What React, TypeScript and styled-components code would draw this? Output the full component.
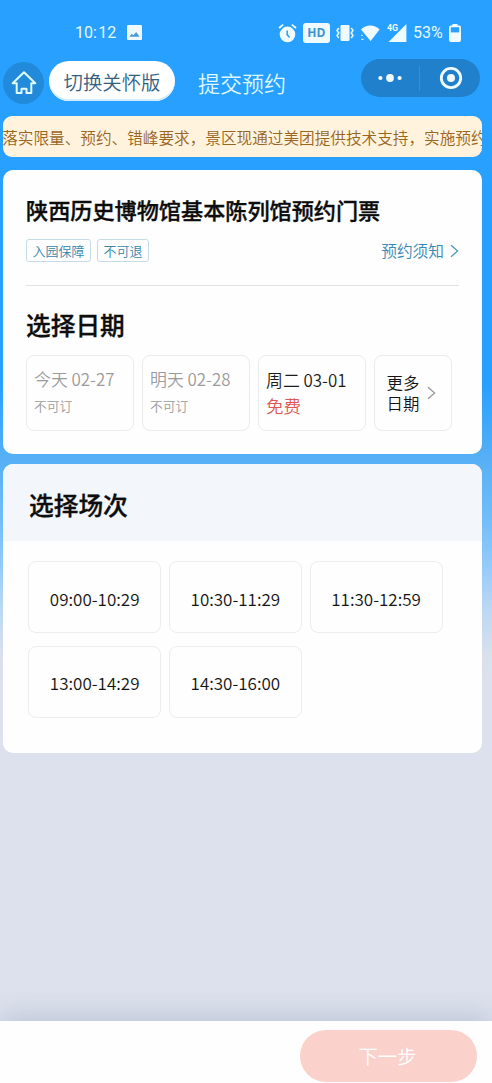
import React from 'react';
import styled, { createGlobalStyle } from 'styled-components';

const GlobalStyle = createGlobalStyle`
  * { box-sizing: border-box; }
  body {
    margin: 0;
    font-family: 'Noto Sans CJK SC', 'Noto Sans', sans-serif;
    font-weight: 350;
    color: #141414;
  }
  button { font-family: inherit; font-weight: inherit; margin: 0; padding: 0; border: 0; background: none; color: inherit; }
`;

const Page = styled.div`
  height: 1083px;
  overflow: hidden;
  display: flex;
  flex-direction: column;
  background: linear-gradient(180deg, #28a0ff 0, #28a0ff 385px, #57b0f5 460px, #72bdf9 520px, #93cafa 565px, #bcd8f3 610px, #d9e0ec 655px, #dde1ed 690px, #dde1ed 100%);
`;

const StatusBar = styled.header`
  height: 59px;
  flex: none;
  display: flex;
  justify-content: space-between;
  align-items: center;
  padding: 6px 31px 0 75px;
  color: #e6f8ff;
`;

const StatusGroup = styled.div<{ $gap: number }>`
  display: flex;
  align-items: center;
  gap: ${(p) => p.$gap}px;
`;

const StatusText = styled.span<{ $size: number }>`
  font-family: Roboto, sans-serif;
  font-size: ${(p) => p.$size}px;
  font-weight: 400;
  word-spacing: -2.5px;
  line-height: 20px;
`;

const NavBar = styled.nav`
  height: 45px;
  flex: none;
  display: flex;
  align-items: flex-start;
  padding: 0 12px 0 3px;
`;

const HomeButton = styled.button`
  width: 41px;
  height: 42px;
  margin-top: 3px;
  border-radius: 50%;
  background: #218ada;
  display: grid;
  place-items: center;
`;

const CarePill = styled.button`
  width: 126px;
  height: 40px;
  margin: 2px 0 0 5px;
  border-radius: 20px;
  background: #fff;
  box-shadow: inset 0 -2px 0 #d3ecfc;
  color: #33617f;
  font-size: 19.4px;
  line-height: 40px;
  padding-top: 1px;
`;

const NavTitle = styled.h1`
  margin: 0 auto 0 23px;
  font-size: 22px;
  font-weight: 350;
  line-height: 46px;
  color: #dff7ff;
`;

const Capsule = styled.div`
  width: 119px;
  height: 38px;
  border-radius: 19px;
  background: #2080cc;
  display: flex;
  align-items: center;
`;

const CapsuleHalf = styled.button`
  flex: 1;
  height: 25px;
  display: grid;
  place-items: center;
  & + & { border-left: 1px solid #3690d7; padding-left: 2px; }
`;

const Notice = styled.div`
  flex: none;
  width: 479px;
  height: 41px;
  margin: 12px 0 0 3px;
  border-radius: 9px;
  background: #fff3de;
  color: #99651f;
  overflow: hidden;
  white-space: nowrap;
  font-size: 15.64px;
  line-height: 43px;
  text-indent: -0.8px;
`;

const Card = styled.section<{ $top: number; $height: number }>`
  flex: none;
  width: 479px;
  height: ${(p) => p.$height}px;
  margin: ${(p) => p.$top}px 0 0 3px;
  border-radius: 10px;
  background: #fefefe;
  overflow: hidden;
`;

const TicketBody = styled.div`
  padding: 23px 23px 0;
`;

const TicketTitle = styled.h2`
  margin: 0;
  font-size: 22.15px;
  line-height: 32px;
  font-weight: 500;
  -webkit-text-stroke: 0.35px currentColor;
  color: #0c0c0c;
`;

const TagRow = styled.div`
  display: flex;
  align-items: center;
  gap: 6px;
  margin-top: 14px;
  height: 23px;
`;

const Tag = styled.span`
  height: 23px;
  padding: 0 5.5px;
  border: 1px solid #c5dbe6;
  border-radius: 3px;
  color: #3586aa;
  font-size: 13px;
  line-height: 22px;
`;

const NoticeLink = styled.a`
  margin-left: auto;
  display: flex;
  align-items: center;
  gap: 6px;
  color: #3889b4;
  font-size: 15.7px;
  line-height: 23px;
`;

const Divider = styled.hr`
  margin: 23px 0 0;
  border: 0;
  height: 1px;
  background: #e3e3e3;
`;

const Heading = styled.h2`
  margin: 0;
  font-size: 24.7px;
  line-height: 36px;
  font-weight: 500;
  -webkit-text-stroke: 0.35px currentColor;
  color: #0e0e0e;
`;

const DateHeading = styled(Heading)`
  margin-top: 20px;
`;

const DateRow = styled.div`
  display: flex;
  gap: 8px;
  margin-top: 13px;
`;

const DateCard = styled.button<{ $muted?: boolean }>`
  width: 108px;
  height: 76px;
  border: 1px solid #ebebee;
  border-radius: 8px;
  padding: 0 7px ${(p) => (p.$muted ? 2 : 1)}px;
  display: flex;
  flex-direction: column;
  justify-content: center;
  text-align: left;
  white-space: nowrap;
  color: ${(p) => (p.$muted ? '#9b9b9b' : '#1c1c1c')};
`;

const DateLabel = styled.span`
  font-size: 16.9px;
  line-height: 26px;
`;

const DateState = styled.span<{ $free?: boolean }>`
  font-size: ${(p) => (p.$free ? 17.5 : 12.8)}px;
  line-height: ${(p) => (p.$free ? 25 : 27)}px;
  color: ${(p) => (p.$free ? '#df5a55' : '#9b9b9b')};
`;

const MoreCard = styled.button`
  width: 78px;
  height: 76px;
  border: 1px solid #ebebee;
  border-radius: 8px;
  padding: 0 0 0 11.5px;
  display: flex;
  align-items: center;
  gap: 7px;
  font-size: 16.4px;
  line-height: 21px;
  text-align: left;
`;

const MoreLabel = styled.span`
  width: 33px;
`;

const SessionHeader = styled.div`
  height: 77px;
  padding: 22px 26px 0;
  background: #f3f7fb;
`;

const SlotGrid = styled.div`
  display: grid;
  grid-template-columns: repeat(3, 133px);
  grid-auto-rows: 72px;
  gap: 12.5px 7.7px;
  padding: 20px 0 0 25.2px;
`;

const Slot = styled.button`
  border: 1px solid #ebedf0;
  border-radius: 8px;
  font-size: 17px;
  line-height: 26px;
  padding-top: 3px;
`;

const Footer = styled.footer`
  flex: none;
  height: 62px;
  margin-top: auto;
  padding: 9px 15px 0 0;
  display: flex;
  justify-content: flex-end;
  background: #fefefe;
  box-shadow: 0 -4px 28px rgba(135, 155, 175, 0.42);
`;

const NextButton = styled.button`
  width: 177px;
  height: 52px;
  border-radius: 26px;
  background: #fad1cb;
  color: #fff;
  font-size: 19.3px;
  line-height: 51px;
  padding: 0 2px 0 0;
`;

const PictureIcon = () => (
  <svg width="15" height="15" viewBox="0 0 16 16">
    <rect width="16" height="16" rx="1.2" fill="#eefaff" />
    <path d="M2.6 12.4 5 9.4l1.8 1.6 3-3.6 3.6 5z" fill="#4c9bd6" />
  </svg>
);

const AlarmIcon = () => (
  <svg width="19" height="20" viewBox="0 0 19 20" fill="none">
    <circle cx="9.5" cy="11.4" r="7.8" fill="#f0fbff" />
    <path d="M1 5 5.2 1.6M18 5 13.8 1.6" stroke="#f0fbff" strokeWidth="1.8" />
    <path d="M9.2 7.4v4.4l2.4 2.8" stroke="#3a9fe9" strokeWidth="1.6" />
  </svg>
);

const HdBadge = styled.span`
  width: 27px;
  height: 20px;
  border-radius: 3px;
  background: #f0fbff;
  color: #3b92d4;
  font: 700 12px/20px 'Open Sans', sans-serif;
  text-align: center;
`;

const VibrateIcon = () => (
  <svg width="18" height="18" viewBox="0 0 18 18" fill="none">
    <rect x="4.5" y="1" width="9" height="16" rx="1.2" fill="#f0fbff" />
    <path d="M2.8 4 1 6.5 2.8 9 1 11.5 2.8 14M15.2 4 17 6.5 15.2 9l1.8 2.5-1.8 2.5" stroke="#f0fbff" strokeWidth="1.5" />
  </svg>
);

const WifiIcon = () => (
  <svg width="20" height="18" viewBox="0 0 20 18">
    <path d="M1 5.4C6.2.2 14.4.2 19.6 5.4L10.6 17z" fill="#f0fbff" />
    <path d="M1.2 11.4h1.6M1.2 15.4h2.4" stroke="#c9eafb" strokeWidth="1.4" />
  </svg>
);

const SignalIcon = () => (
  <svg width="20" height="20" viewBox="0 0 20 20">
    <path d="M19.4 1v18H1.6z" fill="#f0fbff" />
    <text x="0" y="8.2" fill="#f0fbff" fontFamily="Roboto, sans-serif" fontSize="8.8" fontWeight="700" stroke="#28a0ff" strokeWidth="1.8" paintOrder="stroke">4G</text>
  </svg>
);

const BatteryIcon = () => (
  <svg width="12" height="18" viewBox="0 0 12 18" fill="none">
    <path d="M3.4 0h5.2v2.4H3.4z" fill="#f0fbff" />
    <rect x=".9" y="2.3" width="10.2" height="14.8" rx="1" stroke="#f0fbff" strokeWidth="1.8" />
    <path d="M1 8.4h10V17H1z" fill="#f0fbff" />
  </svg>
);

const HomeIcon = () => (
  <svg width="26" height="24" viewBox="0 0 26 24" fill="none" stroke="#e2fbff" strokeWidth="2" strokeLinejoin="round">
    <path d="M13 1.3 1.7 12.2h4v9.9h4.8v-4.4h5v4.4h4.8v-9.9h4z" />
  </svg>
);

const DotsIcon = () => (
  <svg width="24" height="10" viewBox="0 0 24 10" fill="#f2fcff">
    <circle cx="2.4" cy="5" r="2.1" />
    <circle cx="12" cy="5" r="3.9" />
    <circle cx="21.6" cy="5" r="2.1" />
  </svg>
);

const TargetIcon = () => (
  <svg width="24" height="24" viewBox="0 0 24 24" fill="none">
    <circle cx="12" cy="12" r="9.7" stroke="#f2fcff" strokeWidth="2.8" />
    <circle cx="12" cy="12" r="4" fill="#f2fcff" />
  </svg>
);

const Chevron = ({ color }: { color: string }) => (
  <svg width="9" height="14" viewBox="0 0 9 14" fill="none" stroke={color} strokeWidth="1.3">
    <path d="M1 1.2 7.6 7 1 12.8" />
  </svg>
);

const slots = ['09:00-10:29', '10:30-11:29', '11:30-12:59', '13:00-14:29', '14:30-16:00'];

const dates = [
  { label: '今天 02-27', state: '不可订', free: false },
  { label: '明天 02-28', state: '不可订', free: false },
  { label: '周二 03-01', state: '免费', free: true },
];

export default function App() {
  return (
    <Page>
      <GlobalStyle />
      <StatusBar>
        <StatusGroup $gap={11}>
          <StatusText $size={16}>10: 12</StatusText>
          <PictureIcon />
        </StatusGroup>
        <StatusGroup $gap={6.3}>
          <AlarmIcon />
          <HdBadge>HD</HdBadge>
          <VibrateIcon />
          <WifiIcon />
          <SignalIcon />
          <StatusText $size={16}>53%</StatusText>
          <BatteryIcon />
        </StatusGroup>
      </StatusBar>
      <NavBar>
        <HomeButton aria-label="首页"><HomeIcon /></HomeButton>
        <CarePill>切换关怀版</CarePill>
        <NavTitle>提交预约</NavTitle>
        <Capsule>
          <CapsuleHalf aria-label="更多"><DotsIcon /></CapsuleHalf>
          <CapsuleHalf aria-label="关闭"><TargetIcon /></CapsuleHalf>
        </Capsule>
      </NavBar>
      <Notice>落实限量、预约、错峰要求，景区现通过美团提供技术支持，实施预约</Notice>
      <Card $top={13} $height={284}>
        <TicketBody>
          <TicketTitle>陕西历史博物馆基本陈列馆预约门票</TicketTitle>
          <TagRow>
            <Tag>入园保障</Tag>
            <Tag>不可退</Tag>
            <NoticeLink>预约须知<Chevron color="#4f98bd" /></NoticeLink>
          </TagRow>
          <Divider />
          <DateHeading>选择日期</DateHeading>
          <DateRow>
            {dates.map((d) => (
              <DateCard key={d.label} $muted={!d.free}>
                <DateLabel>{d.label}</DateLabel>
                <DateState $free={d.free}>{d.state}</DateState>
              </DateCard>
            ))}
            <MoreCard>
              <MoreLabel>更多日期</MoreLabel>
              <Chevron color="#999" />
            </MoreCard>
          </DateRow>
        </TicketBody>
      </Card>
      <Card $top={10} $height={289}>
        <SessionHeader>
          <Heading>选择场次</Heading>
        </SessionHeader>
        <SlotGrid>
          {slots.map((s) => <Slot key={s}>{s}</Slot>)}
        </SlotGrid>
      </Card>
      <Footer>
        <NextButton>下一步</NextButton>
      </Footer>
    </Page>
  );
}
